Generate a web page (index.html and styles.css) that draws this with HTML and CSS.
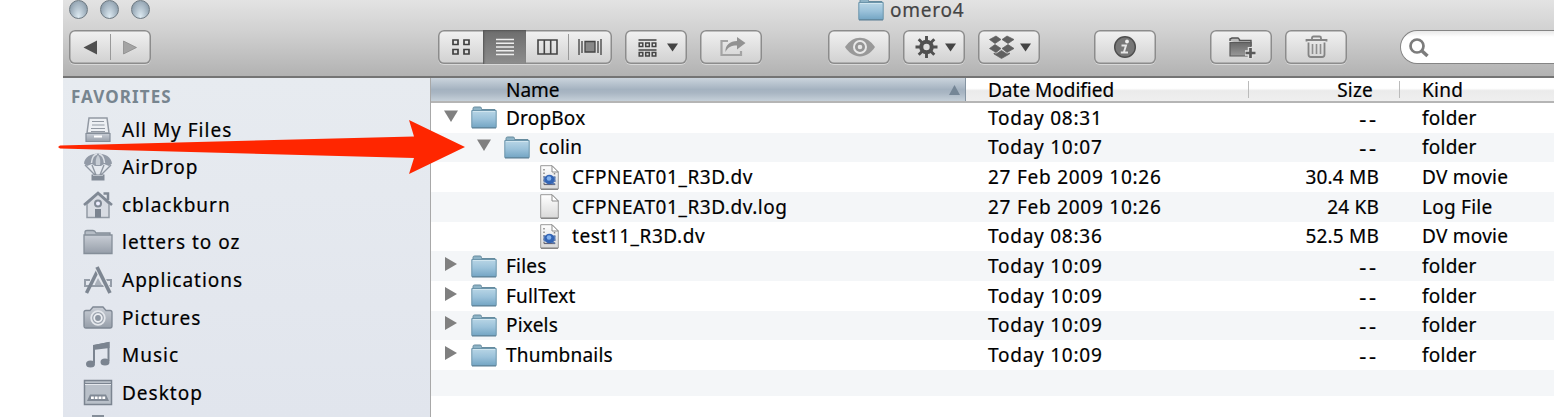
FILE: index.html
```
<!DOCTYPE html>
<html lang="en">
<head>
<meta charset="utf-8">
<title>omero4</title>
<link rel="stylesheet" href="styles.css">
</head>
<body>
<svg class="defs" aria-hidden="true">
  <defs>
    <linearGradient id="blue" x2="0" y2="1"><stop stop-color="#b9d6e6"/><stop offset=".5" stop-color="#9bc2da"/><stop offset="1" stop-color="#74a5c4"/></linearGradient>
    <linearGradient id="steel" x2="0" y2="1"><stop stop-color="#c9ced6"/><stop offset="1" stop-color="#969ea9"/></linearGradient>
    <linearGradient id="paper" x2="0" y2="1"><stop stop-color="#fff"/><stop offset="1" stop-color="#d9d9d9"/></linearGradient>
    <linearGradient id="dark" x2="0" y2="1"><stop stop-color="#686868"/><stop offset="1" stop-color="#999"/></linearGradient>
    <symbol id="folder" viewBox="0 0 26 23">
      <path d="M2 6V2.500Q2 1 3.500 1H9Q10.500 1 10.500 2.500V3.500H24V8H2Z" fill="#8eb3c6" stroke="#668b9e"/>
      <path d="M.8 4.500H25.200V21.500H.8Z" fill="url(#blue)" stroke="#6c95ab"/>
      <path d="M1 22H25" stroke="#587d94"/><path d="M2 5.500H24" stroke="#d0e5ef"/>
    </symbol>
    <symbol id="doc" viewBox="0 0 19 25">
      <path d="M.7.700H12L18.300 7V24H.7Z" fill="url(#paper)" stroke="#999"/>
      <path d="M12 .700V7H18.300Z" fill="#fff" stroke="#8b8b8b"/>
      <path d="M1 24.300H18" stroke="#777"/>
    </symbol>
    <symbol id="movie" viewBox="0 0 19 25">
      <use href="#doc" width="19" height="25"/>
      <path d="M4 4V20M14.500 8V20" stroke="#888" stroke-width="1.500" stroke-dasharray="1.500 2"/>
      <path d="M4 19.500H15" stroke="#667" stroke-width="1.200"/>
      <path d="M3.500 11.500H15.500V17H13.500L15.500 19.500H12.500L10.500 17.500H3.500Z" fill="#5b7db5"/><circle cx="9.400" cy="14.500" r="4.800" fill="#3465b5"/>
      <circle cx="9" cy="13.500" r="2.300" fill="#83b2ee"/>
    </symbol>
    <symbol id="down" viewBox="0 0 14 12"><path d="M0 .5H14L7 12Z" fill="#808080"/></symbol>
    <symbol id="right" viewBox="0 0 12 14"><path d="M0 0L12 7L0 14Z" fill="#808080"/></symbol>
  </defs>
</svg>
<div class="window">
  <header class="chrome">
    <div class="titlebar">
      <div class="lights"><i></i><i></i><i></i></div>
      <div class="title"><svg width="26" height="23"><use href="#folder"/></svg><span>omero4</span></div>
    </div>
    <div class="toolbar">
      <div class="btn nav">
        <svg width="82" height="34" viewBox="0 0 82 34"><path d="M14.500 17.500L28 10.500V24.500Z" fill="#505050"/><path d="M67.500 17.500L54.500 11V24Z" fill="#a4a4a4" stroke="#858585" stroke-width=".7"/><path d="M41.500 4V30" stroke="#999"/></svg>
      </div>
      <div class="btn views">
        <span class="seg s1"><svg width="20" height="18" fill="none" stroke="#3f3f3f" stroke-width="1.700"><path d="M2 2H7V6.500H2ZM13 2H18V6.500H13ZM2 11.500H7V16H2ZM13 11.500H18V16H13Z"/></svg></span>
        <span class="seg on"><svg width="18" height="18"><path d="M0 1.500H18M0 5.200H18M0 9H18M0 12.800H18M0 16.500H18" stroke="#eee" stroke-width="1.600"/></svg></span>
        <span class="seg s3"><svg width="21" height="18" fill="none" stroke="#444" stroke-width="1.600"><path d="M1 2H20V16H1ZM7.300 2V16M13.700 2V16"/></svg></span>
        <span class="seg s4"><svg width="24" height="18"><path d="M1 1V17M4 3V15M20 3V15M23 1V17" stroke="#555" stroke-width="1.500"/><path d="M7 3.500H17V14H7Z" fill="#888" stroke="#444" stroke-width="1.300"/></svg></span>
      </div>
      <div class="btn arrange"><svg width="62" height="34" viewBox="0 0 62 34"><path d="M13.500 10H31.500M13.500 20H31.500" stroke="#444" stroke-width="1.600"/><path d="M14.200 13H17.800V16.500H14.200ZM20.700 13H24.300V16.500H20.700ZM27.200 13H30.800V16.500H27.200ZM14.200 22.500H17.800V26H14.200ZM20.700 22.500H24.300V26H20.700ZM27.200 22.500H30.800V26H27.200Z" fill="none" stroke="#444" stroke-width="1.500"/><path d="M42 13.500H53L47.500 21.500Z" fill="#444"/></svg></div>
      <div class="btn share"><svg width="62" height="34" viewBox="0 0 62 34"><path d="M28 11H21.500V25H41V21" fill="none" stroke="#a4a4a4" stroke-width="2.200"/><path d="M25.500 22C25 15 30 11 37 11V7L45.500 13L37 19.500V15.500C31 15.500 28 17 25.500 22Z" fill="#929292"/></svg></div>
      <div class="btn eye"><svg width="62" height="34" viewBox="0 0 62 34"><path d="M17 17C25 4.500 39 4.500 47 17C39 29.500 25 29.500 17 17Z" fill="#999"/><circle cx="32" cy="17" r="6" fill="#959595" stroke="#e8e8e8" stroke-width="2"/><circle cx="32" cy="17" r="2.300" fill="#e6e6e6"/></svg></div>
      <div class="btn gear"><svg width="62" height="34" viewBox="0 0 62 34"><path d="M23.500 6V28M12.500 17H34.500M15.700 9.200L31.300 24.800M31.300 9.200L15.700 24.800" stroke="#505050" stroke-width="2.900"/><circle cx="23.500" cy="17" r="7.300" fill="#505050"/><circle cx="23.500" cy="17" r="3.200" fill="#dedede"/><path d="M42 13.500H53L47.500 21.500Z" fill="#444"/></svg></div>
      <div class="btn dropbox"><svg width="62" height="34" viewBox="0 0 62 34"><path d="M11.500 9.500L18 6L23 9.500L17 13.500ZM24 9.500L29 6L36 9.500L30 13.500ZM17 14.500L23 18.500L18 22.500L11.500 18.500ZM30 14.500L36 18.500L29 22.500L24 18.500ZM16 23L18 24L23.500 20.500L29 24L31.500 23V24L23.500 28.500L16 24Z" fill="#606060" stroke="#606060" stroke-width=".7"/><path d="M42 13.500H53L47.500 21.500Z" fill="#444"/></svg></div>
      <div class="btn info"><svg width="62" height="34" viewBox="0 0 62 34"><circle cx="31" cy="17" r="10.300" fill="#777" stroke="#4f4f4f" stroke-width="1.500"/><circle cx="33" cy="11.500" r="1.900" fill="#eee"/><path d="M27.500 15.500H32L29.800 22.500H34M26.800 22.500H30.500" fill="none" stroke="#e6e6e6" stroke-width="1.900"/></svg></div>
      <div class="btn newfolder"><svg width="62" height="34" viewBox="0 0 62 34"><path d="M20 11V9L22 8H28L29.500 9.500V10.500H41V16" fill="#bbb" stroke="#555" stroke-width="1.400"/><path d="M20 12.500H41V26H20Z" fill="url(#dark)" stroke="#5a5a5a" stroke-width="1.200"/><path d="M40.500 17V28.500M35 23H46" stroke="#e2e2e2" stroke-width="5.500"/><path d="M40.500 18V28M35.500 23H45.500" stroke="#5a5a5a" stroke-width="2.700"/></svg></div>
      <div class="btn trash"><svg width="62" height="34" viewBox="0 0 62 34"><path d="M27 9.500V8Q27 6.500 28.500 6.500H34.500Q36 6.500 36 8V9.500M21.500 11.500V10H41.500V11.500M23.500 12.500V24.500Q23.500 27 26 27H37Q39.500 27 39.500 24.500V12.500" fill="none" stroke="#848484" stroke-width="1.800"/><path d="M27.500 14V24M31.500 14V24M35.500 14V24" stroke="#8e8e8e" stroke-width="1.600"/></svg></div>
      <div class="search"><svg width="22" height="22"><circle cx="8" cy="8" r="6.500" fill="none" stroke="#7c7c7c" stroke-width="2.700"/><path d="M12.500 12.500L18.500 18" stroke="#7c7c7c" stroke-width="3.500"/></svg></div>
    </div>
  </header>
  <div class="main">
    <aside class="sidebar">
      <h2>FAVORITES</h2>
      <div class="item"><svg width="30" height="28" viewBox="0 0 30 28"><path d="M6 2H24L26 17H4Z" fill="#edf0f4" stroke="#9299a3" stroke-width="1.500"/><path d="M9 5.500H21M9 9H21.500M8 12.500H22M8 15.500H22" stroke="#9299a3" stroke-width="1.200"/><path d="M3 17.500H27V25.500H3Z" fill="url(#steel)" stroke="#858e99" stroke-width="1.200"/><path d="M11 20.500H19" stroke="#fff" stroke-width="2"/></svg><span>All My Files</span></div>
      <div class="item"><svg width="30" height="28" viewBox="0 0 30 28"><path d="M2 12L12 22M28 12L18 22M9 12L13 22M21 12L17 22" stroke="#8f97a2" stroke-width="1.400"/><path d="M1 10.500C2-3 28-3 29 10.500L26 13L21 11L18 13H12L9 11L4 13Z" fill="#929aa6"/><path d="M8.500 10C9 4 12 1.500 14 1M21.500 10C21 4 18 1.500 16 1" stroke="#dce0e6" fill="none" stroke-width="1.500"/><path d="M13 12C12 6 14 3 15 2C16 3 18 6 17 12Z" fill="#c6ccd4"/><path d="M8.500 21.500H21.500V27.500H8.500Z" fill="#828b97"/><path d="M10 22.500H20" stroke="#bbc1c9"/></svg><span>AirDrop</span></div>
      <div class="item"><svg width="30" height="28" viewBox="0 0 30 28"><path d="M4 13L15 3L26 13V26.500H4Z" fill="#d8dce3" stroke="#929aa5" stroke-width="1.500"/><path d="M1 14L15 2L29 14" fill="none" stroke="#808995" stroke-width="2.600"/><path d="M20.500 2.500H25V9" fill="none" stroke="#808995" stroke-width="2.500"/><path d="M12 18H18V26.500H12Z" fill="#7b8490"/><circle cx="15" cy="12.500" r="3" fill="#eef" stroke="#808995" stroke-width="2"/></svg><span>cblackburn</span></div>
      <div class="item"><svg width="30" height="28" viewBox="0 0 30 28"><path d="M2 7V4Q2 2.500 4 2.500H10Q12 2.500 13 5H27V9H2Z" fill="#b6bdc6" stroke="#858e99" stroke-width="1.300"/><path d="M1 7H29V25.500H1Z" fill="url(#steel)" stroke="#858e99" stroke-width="1.300"/></svg><span>letters to oz</span></div>
      <div class="item"><svg width="30" height="28" viewBox="0 0 30 28"><path d="M7 14H2V20H28V14H23" fill="none" stroke="#959da8" stroke-width="2"/><path d="M12 18L15 12L19 19H12Z" fill="#aab1bb"/><path d="M15.500 3L3.500 27" stroke="#7d8692" stroke-width="3.500"/><path d="M14 1L27 27" stroke="#e5e8ed" stroke-width="5.500"/><path d="M14 1L27 27" stroke="#7d8692" stroke-width="3.700"/></svg><span>Applications</span></div>
      <div class="item"><svg width="30" height="28" viewBox="0 0 30 28"><path d="M3 6.500H7L10 3H20L23 6.500H27Q29 6.500 29 8.500V22Q29 24 27 24H3Q1 24 1 22V8.500Q1 6.500 3 6.500Z" fill="url(#steel)" stroke="#7f8894" stroke-width="1.300"/><circle cx="15" cy="14" r="6.800" fill="#9aa2ad" stroke="#e4e7ec" stroke-width="1.800"/><circle cx="15" cy="14" r="3.800" fill="#8d96a2" stroke="#eef0f4" stroke-width="1.800"/></svg><span>Pictures</span></div>
      <div class="item"><svg width="30" height="28" viewBox="0 0 30 28"><path d="M11 22V5L25.500 2V20" fill="none" stroke="#7b8490" stroke-width="2"/><path d="M10 4L26.500 1V7L10 9Z" fill="#7b8490"/><ellipse cx="7.500" cy="23" rx="4.500" ry="3.500" fill="#7b8490"/><ellipse cx="22" cy="21" rx="4.500" ry="3.500" fill="#7b8490"/></svg><span>Music</span></div>
      <div class="item"><svg width="30" height="28" viewBox="0 0 30 28"><path d="M1.500 1.500H28.500V25.500H1.500Z" fill="#b9c0c9" stroke="#7b8490" stroke-width="1.500"/><path d="M2 4.500H28" stroke="#7b8490"/><path d="M2 5.500H28" stroke="#e4e7ec"/><path d="M7 15.500H23L26 22H4Z" fill="#808995"/><path d="M8 18.700H22.500" stroke="#fff" stroke-width="2.600" stroke-dasharray="2.800 1"/></svg><span>Desktop</span></div>
      <div class="item last"><svg width="30" height="28" viewBox="0 0 30 28"><path d="M9 2H20V5M6 6H23V28H6Z" fill="#a8afb9" stroke="#858e99" stroke-width="2"/></svg></div>
    </aside>
    <section class="files">
      <div class="row head">
        <div class="name">Name<svg class="sort" width="11" height="10"><path d="M5.500 0L11 10H0Z" fill="#758696"/></svg></div>
        <div class="date">Date Modified</div><div class="size">Size</div><div class="kind">Kind</div>
      </div>
      <div class="row"><div class="name"><svg class="tri" width="14" height="12"><use href="#down"/></svg><svg class="fold" width="26" height="23"><use href="#folder"/></svg><span>DropBox</span></div><div class="date">Today 08:31</div><div class="size none">--</div><div class="kind">folder</div></div>
      <div class="row"><div class="name child"><svg class="tri" width="14" height="12"><use href="#down"/></svg><svg class="fold" width="26" height="23"><use href="#folder"/></svg><span>colin</span></div><div class="date">Today 10:07</div><div class="size none">--</div><div class="kind">folder</div></div>
      <div class="row"><div class="name leaf"><svg width="19" height="25"><use href="#movie"/></svg><span>CFPNEAT01_R3D.dv</span></div><div class="date">27 Feb 2009 10:26</div><div class="size">30.4 MB</div><div class="kind">DV movie</div></div>
      <div class="row"><div class="name leaf"><svg width="19" height="25"><use href="#doc"/></svg><span>CFPNEAT01_R3D.dv.log</span></div><div class="date">27 Feb 2009 10:26</div><div class="size">24 KB</div><div class="kind">Log File</div></div>
      <div class="row"><div class="name leaf"><svg width="19" height="25"><use href="#movie"/></svg><span>test11_R3D.dv</span></div><div class="date">Today 08:36</div><div class="size">52.5 MB</div><div class="kind">DV movie</div></div>
      <div class="row"><div class="name"><svg class="tri" width="14" height="14"><use href="#right" x="1" width="12" height="14"/></svg><svg class="fold" width="26" height="23"><use href="#folder"/></svg><span>Files</span></div><div class="date">Today 10:09</div><div class="size none">--</div><div class="kind">folder</div></div>
      <div class="row"><div class="name"><svg class="tri" width="14" height="14"><use href="#right" x="1" width="12" height="14"/></svg><svg class="fold" width="26" height="23"><use href="#folder"/></svg><span>FullText</span></div><div class="date">Today 10:09</div><div class="size none">--</div><div class="kind">folder</div></div>
      <div class="row"><div class="name"><svg class="tri" width="14" height="14"><use href="#right" x="1" width="12" height="14"/></svg><svg class="fold" width="26" height="23"><use href="#folder"/></svg><span>Pixels</span></div><div class="date">Today 10:09</div><div class="size none">--</div><div class="kind">folder</div></div>
      <div class="row"><div class="name"><svg class="tri" width="14" height="14"><use href="#right" x="1" width="12" height="14"/></svg><svg class="fold" width="26" height="23"><use href="#folder"/></svg><span>Thumbnails</span></div><div class="date">Today 10:09</div><div class="size none">--</div><div class="kind">folder</div></div>
      <div class="row blank"></div>
    </section>
  </div>
</div>
<svg class="arrow" width="410" height="58" viewBox="0 0 410 58"><path d="M0 29L2 27.500L356 18.500L351 2L407 29L351 56L356 40L2 30.500Z" fill="#ff2600"/></svg>
</body>
</html>
```
FILE: styles.css
```
* { box-sizing: border-box; }
body {
  margin: 0;
  height: 417px;
  overflow: hidden;
  background: #fff;
  color: #000;
  font: 19px/24px "Noto Sans", sans-serif;
  letter-spacing: .6px;
  -webkit-text-stroke: .2px;
}
svg { display: block; flex: none; }
.defs { position: absolute; width: 0; height: 0; }
.window { margin-left: 63px; height: 417px; display: flex; flex-direction: column; }

.chrome {
  height: 78px;
  flex: none;
  background: linear-gradient(#e3e3e3, #cfcfcf 45%, #b2b2b2);
  border-bottom: 2px solid #747474;
}
.titlebar { height: 30px; display: flex; }
.lights { display: flex; gap: 12px; padding-left: 6px; width: 795px; }
.lights i {
  width: 19px;
  height: 19px;
  border-radius: 50%;
  border: 1.5px solid #6d7982;
  background: radial-gradient(ellipse at 50% 90%, #dce9f1, #a3b3c0 60%, #788a98);
}
.title { display: flex; color: #444; }
.title svg { margin-top: -2px; }
.title span { height: 20px; margin-left: 6px; line-height: 20px; letter-spacing: .75px; }

.toolbar { display: flex; height: 34px; }
.btn {
  width: 62px;
  height: 34px;
  flex: none;
  display: flex;
  border-radius: 6px;
  background: linear-gradient(#f2f2f2, #d0d0d0);
  box-shadow: inset 0 0 0 1.5px #8c8c8c, 0 1px 0 #d8d8d8;
}
.nav { width: 82px; margin-left: 6px; }
.views { width: 174px; margin-left: 287px; overflow: hidden; }
.seg { display: flex; align-items: center; justify-content: center; }
.s1 { width: 45px; }
.on { width: 43px; background: linear-gradient(#6d6d6d, #8d8d8d); box-shadow: inset 1px 1px 2px #555; }
.s3 { width: 42px; }
.s4 { width: 44px; background: linear-gradient(#999, #999) 0 50% / 1px 26px no-repeat; }
.arrange, .share, .gear, .dropbox { margin-left: 13px; }
.eye { margin-left: 66px; }
.info { margin-left: 54px; }
.newfolder { margin-left: 54px; }
.trash { margin-left: 13px; }
.search {
  flex: 1;
  margin-left: 53px;
  padding: 7px 0 0 8px;
  border-radius: 17px 0 0 17px;
  border: 1.5px solid #858585;
  border-right: 0;
  background: linear-gradient(#e9e9e9, #fff 6px);
}

.main { flex: 1; min-height: 0; display: flex; }
.sidebar {
  width: 368px;
  flex: none;
  overflow: hidden;
  background: linear-gradient(#e7ebf0, #e1e5ed);
  border-right: 1.5px solid #a8a8a8;
}
.sidebar h2 {
  margin: 7px 0 2px 8px;
  height: 24px;
  font-size: 17px;
  font-weight: 700;
  color: #77858f;
  letter-spacing: 1.1px;
  -webkit-text-stroke: 0;
}
.item { display: flex; align-items: center; height: 37.550px; padding-left: 20px; }
.item span { margin-left: 9px; letter-spacing: 1px; }
.item.last { align-items: flex-start; padding-top: 3px; }

.files { flex: 1; background: #fff; }
.row { display: flex; align-items: center; height: 29.670px; }
.row:nth-child(odd) { background: #f4f6f8; }
.row.blank { height: 26px; }
.name { width: 535px; height: 100%; display: flex; align-items: center; padding-left: 13px; letter-spacing: .2px; }
.child { padding-left: 46px; }
.leaf { padding-left: 109px; letter-spacing: .55px; }
.tri { margin-top: -4px; }
.fold { margin-left: 13px; }
.name span { margin-left: 9px; }
.leaf span { margin-left: 13px; }
.date { width: 282px; padding-left: 22px; letter-spacing: .75px; }
.size { width: 131px; text-align: right; letter-spacing: .2px; }
.size.none { font-size: 22px; letter-spacing: 2.800px; padding-right: 0; }
.kind { padding-left: 43px; letter-spacing: .25px; }
.row.head {
  height: 25px;
  background: linear-gradient(#fff 45%, #ebebeb 55%, #efefef);
  border-bottom: 2px solid #b5b5b5;
}
.head .name {
  padding-left: 75px;
  letter-spacing: 0;
  background: linear-gradient(#cbd4dd, #a4b2c0 50%, #a9b6c3 65%, #c5d0d9);
  border-right: 1.5px solid #8594a2;
}
.head .date { letter-spacing: 0; }
.sort { margin-left: auto; margin-right: 5px; }
.head .size { padding-right: 6px; border-left: 1px solid #bbb; }
.head .size, .head .kind { height: 17px; line-height: 19px; }
.head .kind { margin-left: 20px; padding-left: 22px; border-left: 1px solid #bbb; }

.arrow { position: absolute; left: 58px; top: 118px; }
```
